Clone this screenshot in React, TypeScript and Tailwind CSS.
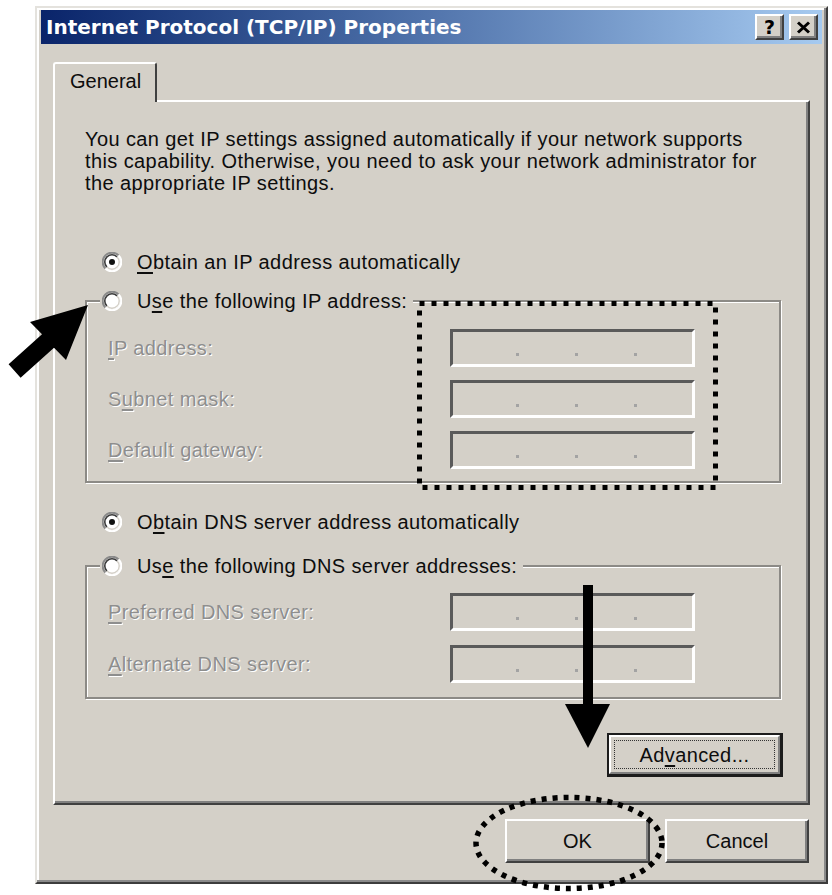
import React from "react";

function Radio({ checked }: { checked?: boolean }) {
  return (
    <svg width="20" height="20" viewBox="0 0 20 20" className="block">
      <circle cx="10" cy="10" r="8.6" fill="#ffffff" />
      <path d="M3.4 16.6 A9.3 9.3 0 0 1 16.6 3.4" stroke="#8a8a8a" strokeWidth="2" fill="none" />
      <path d="M4.9 15.1 A7.2 7.2 0 0 1 15.1 4.9" stroke="#3c3c3c" strokeWidth="1.6" fill="none" />
      <path d="M16.6 3.4 A9.3 9.3 0 0 1 3.4 16.6" stroke="#ffffff" strokeWidth="2" fill="none" />
      <path d="M15.1 4.9 A7.2 7.2 0 0 1 4.9 15.1" stroke="#d4d0c8" strokeWidth="1.4" fill="none" />
      {checked && <circle cx="10" cy="10" r="3" fill="#111111" />}
    </svg>
  );
}

function U({ children }: { children: React.ReactNode }) {
  return <span className="underline decoration-2 underline-offset-[3px]">{children}</span>;
}

function IpField() {
  return (
    <div className="h-[38px] w-[245px] bg-[#d4d0c8] border-[3px] border-t-[#5a5a5a] border-l-[#5a5a5a] border-r-white border-b-white flex items-start pt-[21px] pl-[63px] gap-[56px]">
      <span className="block w-[3px] h-[3px] bg-[#a3a3a3]" />
      <span className="block w-[3px] h-[3px] bg-[#a3a3a3]" />
      <span className="block w-[3px] h-[3px] bg-[#a3a3a3]" />
    </div>
  );
}

function FieldRow({ label }: { label: React.ReactNode }) {
  return (
    <div className="flex items-center h-[38px]">
      <span className="w-[342px] whitespace-nowrap text-[#8e8e8e] [text-shadow:1px_1px_0_#ffffff]">{label}</span>
      <IpField />
    </div>
  );
}

function RadioLine({ checked, children }: { checked?: boolean; children: React.ReactNode }) {
  return (
    <div className="flex items-center h-[22px]">
      <Radio checked={checked} />
      <span className="ml-[15px] whitespace-nowrap">{children}</span>
    </div>
  );
}

function RaisedButton({ children, w }: { children: React.ReactNode; w: string }) {
  return (
    <div
      className={`${w} h-[44px] bg-[#d4d0c8] border-2 border-t-white border-l-white border-r-[#404040] border-b-[#404040] shadow-[inset_-2px_-2px_0_#808080] flex items-center justify-center`}
    >
      {children}
    </div>
  );
}

function TitleBtn({ children }: { children: React.ReactNode }) {
  return (
    <div className="w-[29px] h-[26px] bg-[#d4d0c8] border-2 border-t-white border-l-white border-r-[#404040] border-b-[#404040] shadow-[inset_-2px_-2px_0_#808080] flex items-center justify-center">
      {children}
    </div>
  );
}

export default function App() {
  return (
    <div className="relative w-[832px] h-[895px] bg-white overflow-hidden font-['Liberation_Sans',Arial,sans-serif] text-[20px] leading-[22px] text-[#0d0d0d]">
      {/* Window */}
      <div className="ml-[35px] mt-[6px] w-[793px] bg-[#d4d0c8] border-2 border-t-[#e4e2dd] border-l-[#e4e2dd] border-r-[#3c3c3c] border-b-[#3c3c3c] shadow-[inset_-2px_-2px_0_#8a8a8a,inset_2px_2px_0_#ffffff] pt-[2px] px-[4px] pb-[19px]">
        {/* Title bar */}
        <div className="h-[34px] flex items-center justify-between bg-linear-to-r from-[#0a246a] to-[#a6caf0] pl-[5px] pr-[4px]">
          <span className="font-['DejaVu_Sans',sans-serif] font-bold text-white text-[20px] leading-[24px] whitespace-nowrap">
            Internet Protocol (TCP/IP) Properties
          </span>
          <div className="flex gap-[5px]">
            <TitleBtn>
              <span className="font-['DejaVu_Sans',sans-serif] font-bold text-[19px] leading-[20px] text-black">?</span>
            </TitleBtn>
            <TitleBtn>
              <svg width="15" height="13" viewBox="0 0 15 13">
                <path d="M2 1.5 L13 11.5 M13 1.5 L2 11.5" stroke="#000" strokeWidth="3" />
              </svg>
            </TitleBtn>
          </div>
        </div>

        {/* Tab + panel */}
        <div className="mt-[18px] mx-[12px]">
          <div className="relative z-10 -mb-[2px] w-[104px] h-[40px] bg-[#d4d0c8] border-t-2 border-l-2 border-r-2 border-t-white border-l-white border-r-[#404040] rounded-t-[3px] pl-[15px] pt-[6px]">
            General
          </div>
          <div className="bg-[#d4d0c8] border-2 border-t-white border-l-white border-r-[#404040] border-b-[#404040] shadow-[inset_-2px_-2px_0_#808080] pt-[26px] pl-[30px] pr-[27px] pb-[26px] flex flex-col tracking-[0.4px]">
            <p className="whitespace-nowrap">
              You can get IP settings assigned automatically if your network supports
              <br />
              this capability. Otherwise, you need to ask your network administrator for
              <br />
              the appropriate IP settings.
            </p>

            <div className="mt-[57px] ml-[17px]">
              <RadioLine checked>
                <U>O</U>btain an IP address automatically
              </RadioLine>
            </div>

            <fieldset className="mt-[17px] border-2 border-[#8c8a86] shadow-[inset_1px_1px_0_#ffffff,1px_1px_0_#ffffff] pb-[12px]">
              <legend className="ml-[13px] h-[22px] bg-[#d4d0c8] pl-[2px] pr-[6px]">
                <RadioLine>
                  U<U>s</U>e the following IP address:
                </RadioLine>
              </legend>
              <div className="pt-[17px] pl-[21px] flex flex-col gap-[13px]">
                <FieldRow label={<><U>I</U>P address:</>} />
                <FieldRow label={<>S<U>u</U>bnet mask:</>} />
                <FieldRow label={<><U>D</U>efault gateway:</>} />
              </div>
            </fieldset>

            <div className="mt-[28px] ml-[17px]">
              <RadioLine checked>
                O<U>b</U>tain DNS server address automatically
              </RadioLine>
            </div>

            <fieldset className="mt-[22px] border-2 border-[#8c8a86] shadow-[inset_1px_1px_0_#ffffff,1px_1px_0_#ffffff] pb-[14px]">
              <legend className="ml-[13px] h-[22px] bg-[#d4d0c8] pl-[2px] pr-[6px]">
                <RadioLine>
                  Us<U>e</U> the following DNS server addresses:
                </RadioLine>
              </legend>
              <div className="pt-[16px] pl-[21px] flex flex-col gap-[14px]">
                <FieldRow label={<><U>P</U>referred DNS server:</>} />
                <FieldRow label={<><U>A</U>lternate DNS server:</>} />
              </div>
            </fieldset>

            <div className="mt-[34px] self-end -mr-[2px] w-[176px] h-[44px] border-2 border-[#1c1c1c] border-r-[3px] border-b-[3px]">
              <div className="w-full h-full bg-[#d4d0c8] border-2 border-t-white border-l-white border-r-[#808080] border-b-[#808080] p-[3px]">
                <div className="w-full h-full border border-dotted border-[#333] flex items-center justify-center">
                  Ad<U>v</U>anced...
                </div>
              </div>
            </div>
          </div>
        </div>

        {/* Bottom buttons */}
        <div className="mt-[14px] mx-[12px] pr-[1px] flex justify-end gap-[15px]">
          <RaisedButton w="w-[145px]">OK</RaisedButton>
          <RaisedButton w="w-[144px]">Cancel</RaisedButton>
        </div>
      </div>

      {/* Annotation overlay */}
      <svg className="absolute left-0 top-0 pointer-events-none" width="832" height="895" viewBox="0 0 832 895">
        <polygon
          points="88,305 66,360 54,347.7 20.6,377.7 8.6,364.3 42,334.3 30,322"
          fill="#000"
        />
        <rect x="583" y="585" width="10" height="122" fill="#000" />
        <polygon points="565,704 610,704 588,748" fill="#000" />
        <rect x="419.5" y="303.5" width="296" height="184" fill="none" stroke="#000" strokeWidth="5" strokeDasharray="5 7" />
        <ellipse cx="569" cy="843" rx="93" ry="45.5" fill="none" stroke="#000" strokeWidth="5.5" strokeDasharray="5 6" />
      </svg>
    </div>
  );
}
